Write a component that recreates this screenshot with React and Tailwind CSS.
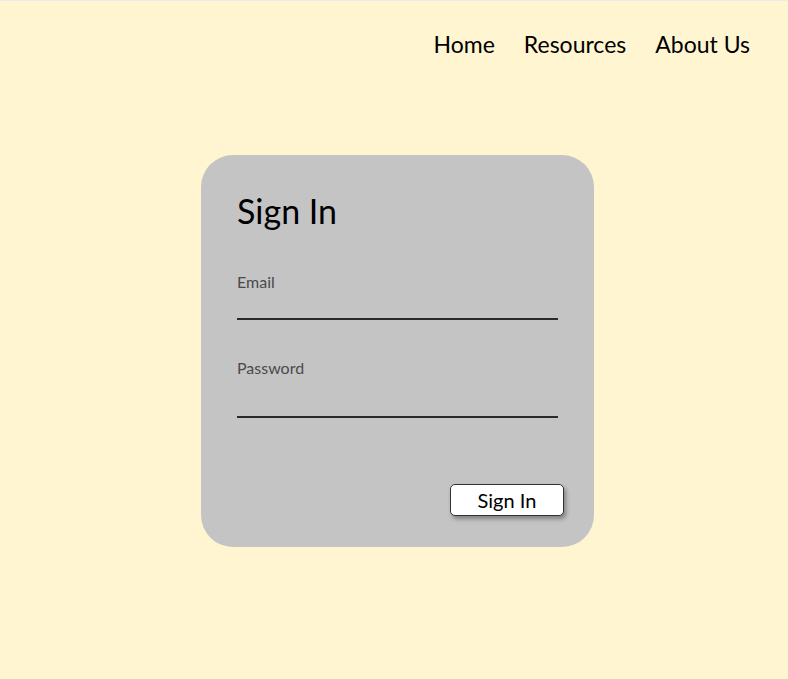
export default function App() {
  return (
    <div className="w-[788px] h-[679px] bg-[#fff6d1] border-t border-[#ececec] font-['Lato',sans-serif] text-black overflow-hidden">
      {/* Top nav */}
      <nav className="flex justify-end gap-[29px] pr-[38px] pt-[27px] text-[23px] leading-[32px]">
        <a href="#">Home</a>
        <a href="#">Resources</a>
        <a href="#">About Us</a>
      </nav>

      {/* Sign-in card */}
      <div className="ml-[201px] mt-[95px] w-[393px] h-[392px] rounded-[32px] bg-[#c4c4c4] px-[36px] pt-[36px] flex flex-col">
        <h1 className="text-[34px] leading-[40px]">Sign In</h1>

        <label className="mt-[41px] text-[16px] leading-[20px] text-[#4a4a4a]">Email</label>
        <div className="mt-[26px] h-[2px] bg-[#2a2a2a]" />

        <label className="mt-[38px] text-[16px] leading-[20px] text-[#4a4a4a]">Password</label>
        <div className="mt-[38px] h-[2px] bg-[#2a2a2a]" />

        <div className="flex justify-end mt-[66px] -mr-[6px]">
          <button className="w-[114px] h-[32px] bg-white border border-[#333] rounded-[5px] text-[20px] leading-[28px] shadow-[2px_3px_4px_rgba(0,0,0,0.35)]">
            Sign In
          </button>
        </div>
      </div>
    </div>
  );
}
